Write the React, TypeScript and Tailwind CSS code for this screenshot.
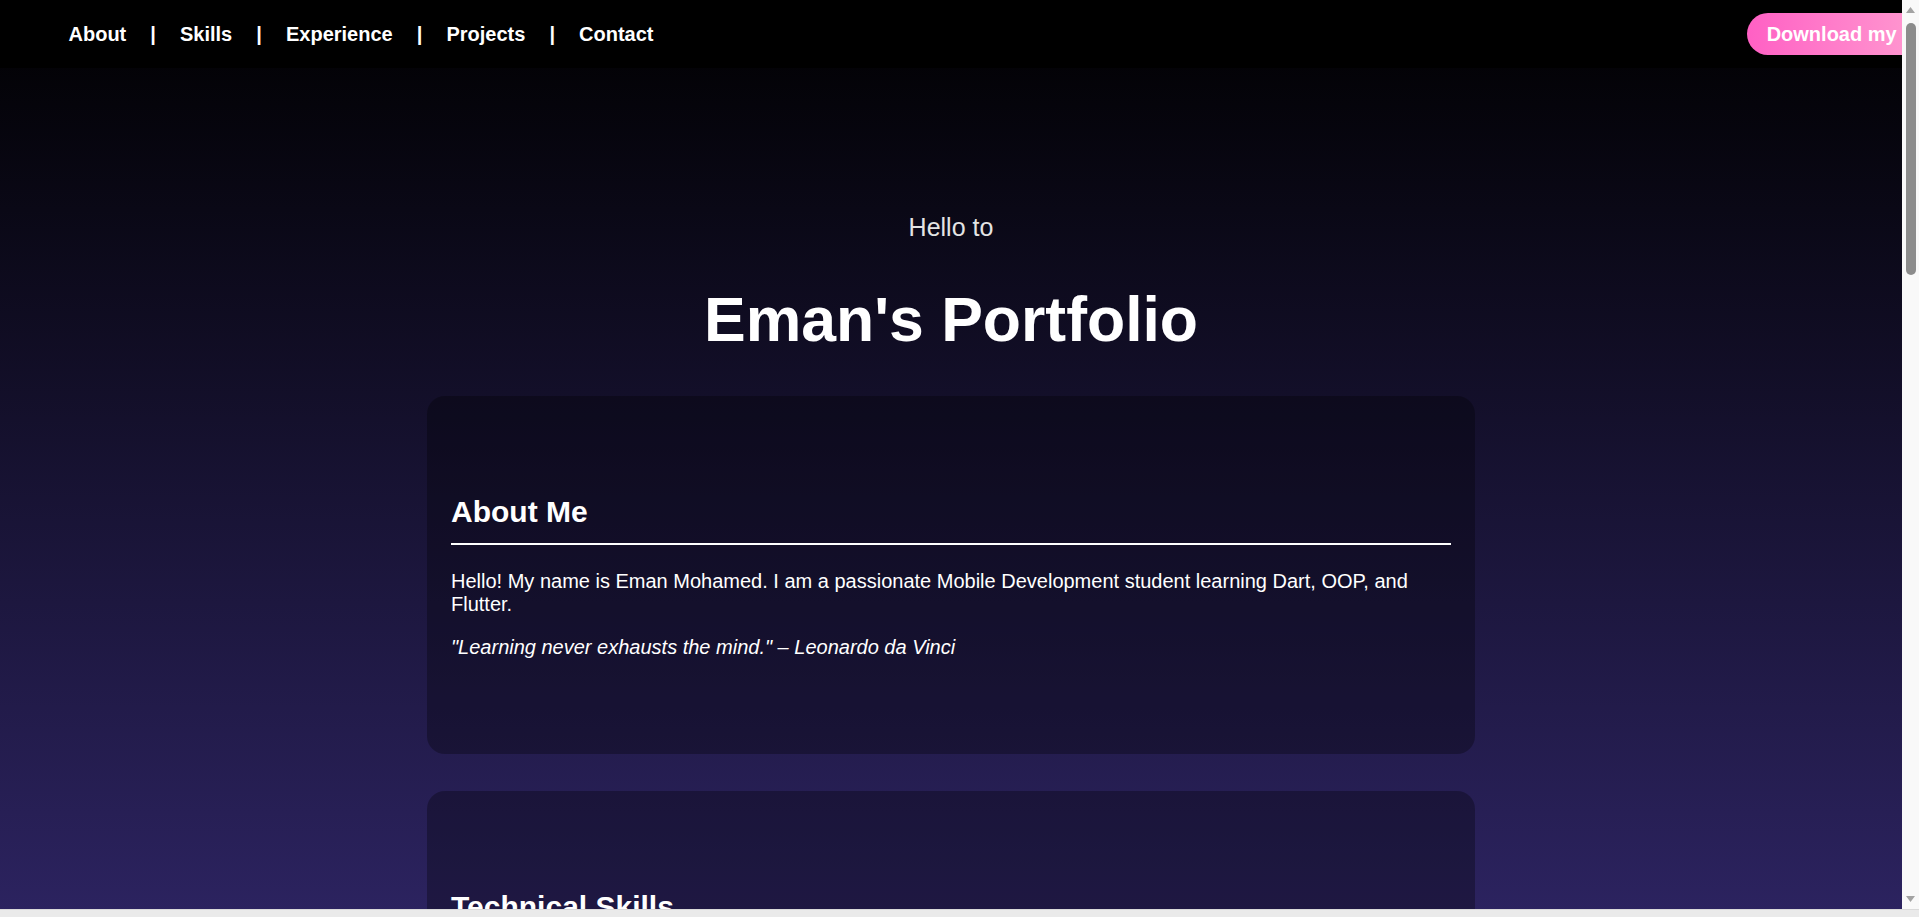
import React from "react";

function Card({ title, children }: { title: string; children: React.ReactNode }) {
  return (
    <section className="w-[1048px] px-6 pt-[99px] pb-[95px] rounded-[18px] bg-black/30">
      <h2 className="text-[30px] font-bold pb-[14px] border-b-2 border-white">{title}</h2>
      <div className="mt-[25px] flex flex-col gap-5 text-[20px]">{children}</div>
    </section>
  );
}

function ScrollbarV() {
  return (
    <div className="w-[17px] shrink-0 bg-[#f9f9f9] flex flex-col items-center pt-[7px] pb-[7px]">
      <svg width="9" height="6" viewBox="0 0 9 6">
        <polygon points="0,6 4.5,0 9,6" fill="#a3a3a3" />
      </svg>
      <div className="mt-[10px] h-[252px] w-[10px] rounded-full bg-[#8c8c8c]" />
      <div className="flex-1" />
      <svg width="9" height="6" viewBox="0 0 9 6">
        <polygon points="0,0 4.5,6 9,0" fill="#a3a3a3" />
      </svg>
    </div>
  );
}

export default function App() {
  const links = ["About", "Skills", "Experience", "Projects", "Contact"];
  return (
    <div className="h-screen w-full overflow-hidden flex flex-col leading-[normal] text-white font-['Liberation_Sans',Arial,sans-serif]">
      <div className="flex flex-1 min-h-0">
        <div className="flex-1 min-w-0 overflow-hidden bg-[linear-gradient(180deg,#000_0px,#2c2360_917px,#2c2360_100%)]">
          <nav className="w-[calc(100%+98px)] h-[68px] bg-black flex items-center justify-between px-[50px]">
            <div className="text-[20px] font-bold whitespace-pre">
              {links.map((l, i) => (
                <React.Fragment key={l}>
                  <a href="#" className="px-[18.5px] text-white">{l}</a>
                  {i < links.length - 1 ? " | " : ""}
                </React.Fragment>
              ))}
            </div>
            <a
              href="#"
              className="h-[42px] px-5 rounded-full flex items-center text-[20px] font-bold whitespace-nowrap text-white bg-[linear-gradient(90deg,#ff60c4,#ffa3d2)]"
            >
              Download my CV
            </a>
          </nav>

          <main className="flex flex-col items-center pt-[145px] pb-[120px]">
            <p className="text-[25px] text-[#e4e4e4]">Hello to</p>
            <h1 className="mt-[41px] text-[62.5px] font-bold">Eman's Portfolio</h1>

            <div className="mt-[41px] flex flex-col gap-[37px]">
              <Card title="About Me">
                <p>
                  Hello! My name is Eman Mohamed. I am a passionate Mobile Development student learning Dart, OOP, and
                  Flutter.
                </p>
                <p className="italic">"Learning never exhausts the mind." – Leonardo da Vinci</p>
              </Card>

              <Card title="Technical Skills">
                <ul className="flex flex-col gap-2 list-disc pl-8">
                  <li>Dart Programming Language</li>
                  <li>Object-Oriented Programming (OOP)</li>
                  <li>Flutter &amp; Widgets</li>
                  <li>Firebase Basics</li>
                  <li>Git &amp; GitHub</li>
                  <li>HTML, CSS &amp; JavaScript</li>
                </ul>
              </Card>

              <Card title="Experience">
                <div>
                  <h3 className="font-bold text-[22px]">Mobile Development Trainee</h3>
                  <p className="mt-2">Building small Flutter applications and practicing clean code and OOP concepts.</p>
                </div>
              </Card>
            </div>
          </main>
        </div>
        <ScrollbarV />
      </div>
      <div className="h-[8px] shrink-0 bg-[#eaeaea] border-t border-[#dadada]" />
    </div>
  );
}
